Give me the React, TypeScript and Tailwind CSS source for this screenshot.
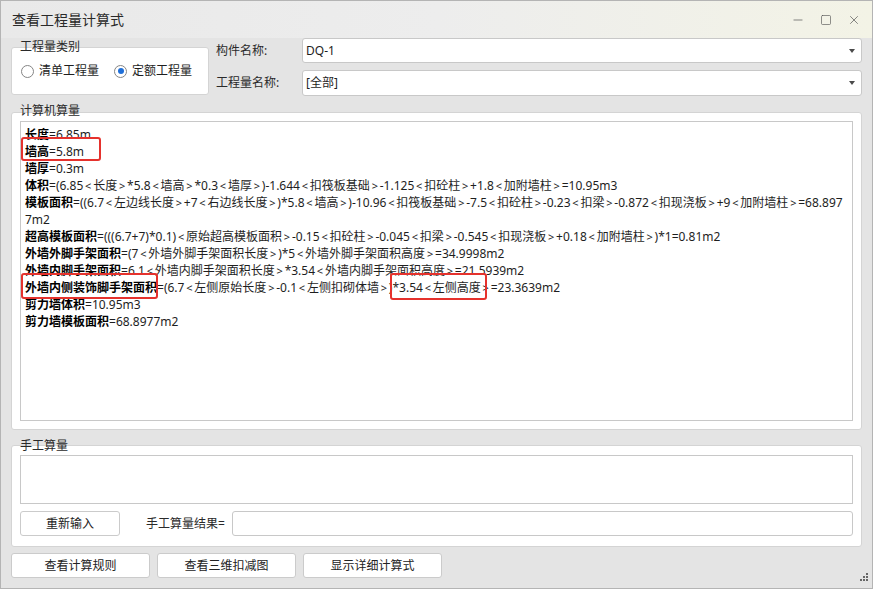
import { Minus, Square, X } from "lucide-react";

const font = "font-['Noto_Sans','Noto_Sans_CJK_SC',sans-serif]";

type Line = { label?: string; text: string };

const lines: Line[] = [
  { label: "长度", text: "=6.85m" },
  { label: "墙高", text: "=5.8m" },
  { label: "墙厚", text: "=0.3m" },
  {
    label: "体积",
    text: "=(6.85<长度>*5.8<墙高>*0.3<墙厚>)-1.644<扣筏板基础>-1.125<扣砼柱>+1.8<加附墙柱>=10.95m3",
  },
  {
    label: "模板面积",
    text: "=((6.7<左边线长度>+7<右边线长度>)*5.8<墙高>)-10.96<扣筏板基础>-7.5<扣砼柱>-0.23<扣梁>-0.872<扣现浇板>+9<加附墙柱>=68.897",
  },
  { text: "7m2" },
  {
    label: "超高模板面积",
    text: "=(((6.7+7)*0.1)<原始超高模板面积>-0.15<扣砼柱>-0.045<扣梁>-0.545<扣现浇板>+0.18<加附墙柱>)*1=0.81m2",
  },
  { label: "外墙外脚手架面积", text: "=(7<外墙外脚手架面积长度>)*5<外墙外脚手架面积高度>=34.9998m2" },
  { label: "外墙内脚手架面积", text: "=6.1<外墙内脚手架面积长度>*3.54<外墙内脚手架面积高度>=21.5939m2" },
  { label: "外墙内侧装饰脚手架面积", text: "=(6.7<左侧原始长度>-0.1<左侧扣砌体墙>)*3.54<左侧高度>=23.3639m2" },
  { label: "剪力墙体积", text: "=10.95m3" },
  { label: "剪力墙模板面积", text: "=68.8977m2" },
];

// the dialog draws < > with a little air on both sides
function Formula({ text }: { text: string }) {
  return (
    <>
      {text.split(/([<>])/).map((part, i) =>
        part === "<" || part === ">" ? (
          <span key={i} className="mx-[1.8px] inline-block text-[11px]">
            {part}
          </span>
        ) : (
          <span key={i}>{part}</span>
        )
      )}
    </>
  );
}

function Radio({ checked, label }: { checked?: boolean; label: string }) {
  return (
    <label className="flex items-center gap-[5px]">
      <span className="flex h-[13px] w-[13px] items-center justify-center rounded-full border border-[#858585] bg-white">
        {checked && <span className="h-[6px] w-[6px] rounded-full bg-[#1f6fd8]" />}
      </span>
      <span>{label}</span>
    </label>
  );
}

function Select({ value, className }: { value: string; className?: string }) {
  return (
    <div
      className={`flex h-[25px] w-[560px] items-center justify-between rounded-[3px] border border-[#c8c8c8] bg-white pl-[3px] pr-[6px] ${className ?? ""}`}
    >
      <span>{value}</span>
      <span className="h-0 w-0 border-x-[3px] border-t-[4px] border-x-transparent border-t-[#4a4a4a]" />
    </div>
  );
}

function Button({ children, className }: { children: string; className?: string }) {
  return (
    <button
      className={`flex h-[25px] items-center justify-center rounded-[3px] border border-[#cbcbcb] bg-white text-[12px] text-[#222] ${className ?? ""}`}
    >
      {children}
    </button>
  );
}

export default function App() {
  return (
    <div
      className={`${font} flex h-[589px] w-[873px] flex-col overflow-hidden border border-[#b4b4b4] bg-[#e4e4e4] text-[12px] text-[#1e1e1e]`}
    >
      {/* Title bar */}
      <div className="flex h-[37px] shrink-0 items-center justify-between bg-gradient-to-r from-[#e9e9e9] via-[#ededed] to-[#f3f3e6] pl-[11px] pr-[11px]">
        <span className="text-[14px] text-[#2a2a2a]">查看工程量计算式</span>
        <div className="flex items-center gap-[15px] text-[#555]">
          <Minus size={14} strokeWidth={1.2} />
          <Square size={12} strokeWidth={1.3} />
          <X size={14} strokeWidth={1.2} />
        </div>
      </div>

      <div className="flex flex-col px-[10px]">
        {/* Top row */}
        <div className="flex items-start">
          <div className="relative mt-[9px] flex h-[48px] w-[198px] items-center gap-[15px] rounded-[3px] border border-[#d4d4d4] bg-white pl-[9px]">
            <span className="absolute -top-[9px] left-[8px] leading-[16px] text-[#2a2a2a]">工程量类别</span>
            <Radio label="清单工程量" />
            <Radio checked label="定额工程量" />
          </div>
          <div className="ml-[7px] flex w-[86px] flex-col gap-[14px] pt-[5px] text-[#2a2a2a]">
            <span className="leading-[16px]">构件名称:</span>
            <span className="mt-[2px] leading-[16px]">工程量名称:</span>
          </div>
          <div className="flex flex-col gap-[7px]">
            <Select value="DQ-1" />
            <Select value="[全部]" className="h-[26px]" />
          </div>
        </div>

        {/* Computer calculation */}
        <div className="relative mt-[16px] rounded-[3px] border border-[#d4d4d4] bg-white p-[8px]">
          <span className="absolute -top-[10px] left-[8px] leading-[16px] text-[#2a2a2a]">计算机算量</span>
          <div className="relative h-[300px] border border-[#c8c8c8] bg-white pl-[4px] pt-[4px]">
            {lines.map((l, i) => (
              <div key={i} className="whitespace-nowrap leading-[17px]">
                {l.label && <span className="font-bold text-black">{l.label}</span>}
                <Formula text={l.text} />
              </div>
            ))}
            <div className="absolute left-0 top-[15px] h-[24px] w-[80px] rounded-[3px] border-2 border-[#e5322d]" />
            <div className="absolute left-0 top-[151px] h-[26px] w-[137px] rounded-[3px] border-2 border-[#e5322d]" />
            <div className="absolute left-[369px] top-[151px] h-[27px] w-[97px] rounded-[3px] border-2 border-[#e5322d]" />
          </div>
        </div>

        {/* Manual calculation */}
        <div className="relative mt-[15px] flex flex-col gap-[7px] rounded-[3px] border border-[#d4d4d4] bg-white px-[8px] pb-[10px] pt-[9px]">
          <span className="absolute -top-[8px] left-[8px] leading-[16px] text-[#2a2a2a]">手工算量</span>
          <div className="h-[49px] border border-[#c8c8c8] bg-white" />
          <div className="flex items-center">
            <Button className="w-[100px]">重新输入</Button>
            <span className="ml-[26px] w-[86px] text-[#2a2a2a]">手工算量结果=</span>
            <div className="h-[25px] flex-1 rounded-[3px] border border-[#c8c8c8] bg-white" />
          </div>
        </div>

        {/* Bottom buttons */}
        <div className="relative mt-[6px] flex gap-[7px]">
          <Button className="w-[139px]">查看计算规则</Button>
          <Button className="w-[139px]">查看三维扣减图</Button>
          <Button className="w-[139px]">显示详细计算式</Button>
          <div className="absolute -right-[6px] top-[20px] grid grid-cols-3 gap-[1px]">
            <span />
            <span />
            <span className="h-[2px] w-[2px] bg-[#666]" />
            <span />
            <span className="h-[2px] w-[2px] bg-[#666]" />
            <span className="h-[2px] w-[2px] bg-[#666]" />
            <span className="h-[2px] w-[2px] bg-[#666]" />
            <span className="h-[2px] w-[2px] bg-[#666]" />
            <span className="h-[2px] w-[2px] bg-[#666]" />
          </div>
        </div>
      </div>
    </div>
  );
}
